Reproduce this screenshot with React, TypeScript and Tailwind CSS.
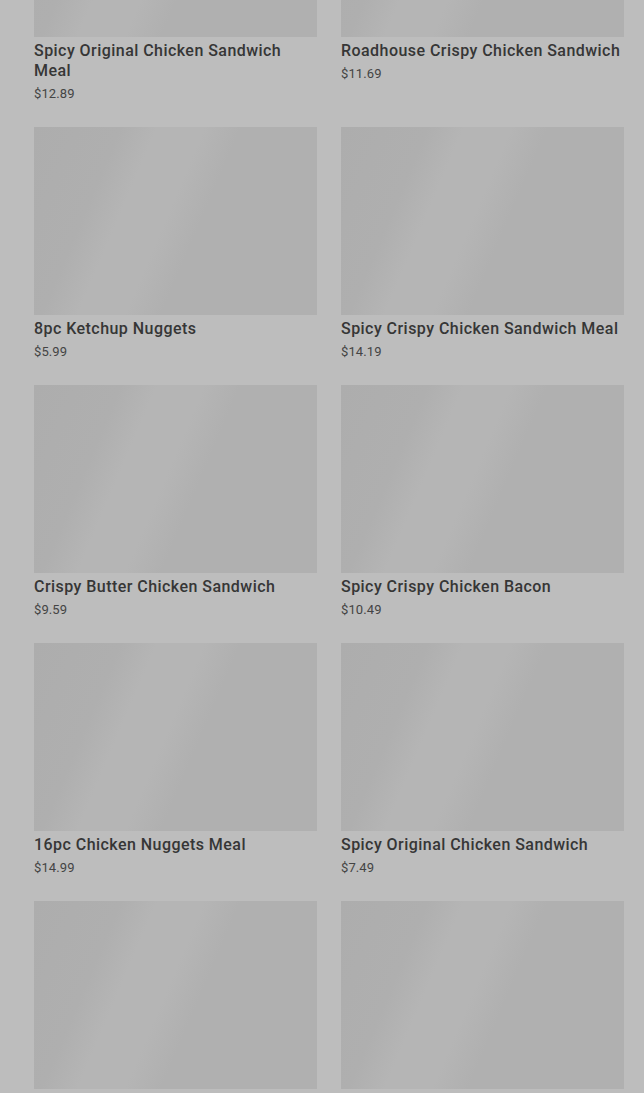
import React from "react";

type Item = { name: string; price: string };

const items: Item[] = [
  { name: "Spicy Original Chicken Sandwich Meal", price: "$12.89" },
  { name: "Roadhouse Crispy Chicken Sandwich", price: "$11.69" },
  { name: "8pc Ketchup Nuggets", price: "$5.99" },
  { name: "Spicy Crispy Chicken Sandwich Meal", price: "$14.19" },
  { name: "Crispy Butter Chicken Sandwich", price: "$9.59" },
  { name: "Spicy Crispy Chicken Bacon", price: "$10.49" },
  { name: "16pc Chicken Nuggets Meal", price: "$14.99" },
  { name: "Spicy Original Chicken Sandwich", price: "$7.49" },
  { name: "Original Chicken Sandwich Meal", price: "$11.29" },
  { name: "Crispy Chicken Sandwich", price: "$6.99" },
];

function Card({ item }: { item: Item }) {
  return (
    <div className="flex flex-col">
      <div className="h-[188px] w-full bg-[linear-gradient(113deg,#adadad_0%,#afafaf_24%,#b5b5b5_34%,#b5b5b5_47%,#b0b0b0_57%,#b0b0b0_100%)]" />
      <div className="mt-[4px] text-[16px] leading-5 font-medium text-[#363636] tracking-[0.45px]">
        {item.name}
      </div>
      <div className="mt-[3px] text-[13px] leading-5 text-[#444444] tracking-[0.1px]">{item.price}</div>
    </div>
  );
}

export default function App() {
  return (
    <div
      className="h-[1093px] w-full overflow-hidden bg-[#bdbdbd]"
      style={{ fontFamily: "Roboto, 'Noto Sans', sans-serif" }}
    >
      <div className="-mt-[151px] grid grid-cols-2 items-start gap-x-6 gap-y-[23px] pl-[34px] pr-5">
        {items.map((it) => (
          <Card key={it.name} item={it} />
        ))}
      </div>
    </div>
  );
}
